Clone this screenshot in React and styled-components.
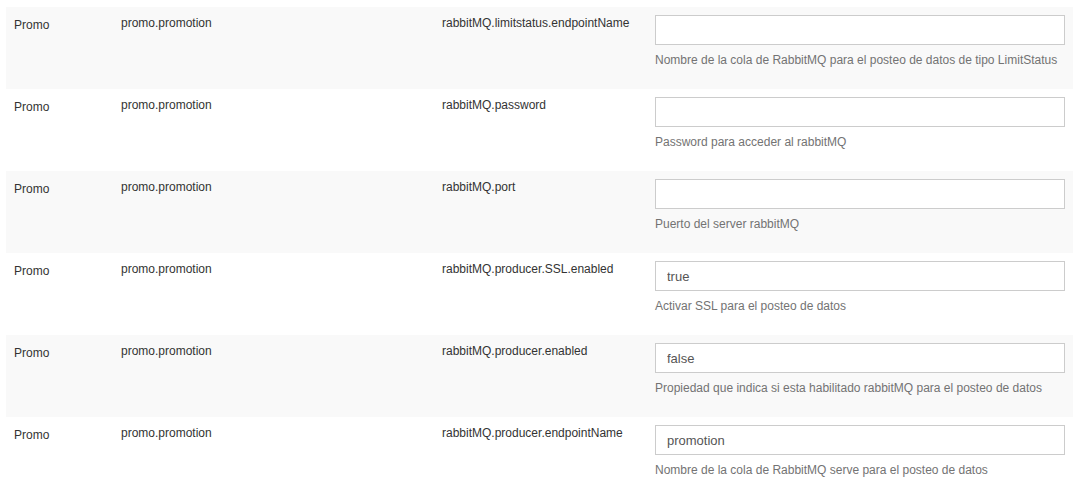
import React from 'react';
import styled, { createGlobalStyle } from 'styled-components';

const GlobalStyle = createGlobalStyle`
  body {
    margin: 0;
    background: #fff;
    font-family: "Liberation Sans", Arial, sans-serif;
  }
`;

const rows = [
  {
    key: 'rabbitMQ.limitstatus.endpointName',
    value: '',
    help: 'Nombre de la cola de RabbitMQ para el posteo de datos de tipo LimitStatus',
  },
  { key: 'rabbitMQ.password', value: '', help: 'Password para acceder al rabbitMQ' },
  { key: 'rabbitMQ.port', value: '', help: 'Puerto del server rabbitMQ' },
  { key: 'rabbitMQ.producer.SSL.enabled', value: 'true', help: 'Activar SSL para el posteo de datos' },
  {
    key: 'rabbitMQ.producer.enabled',
    value: 'false',
    help: 'Propiedad que indica si esta habilitado rabbitMQ para el posteo de datos',
  },
  {
    key: 'rabbitMQ.producer.endpointName',
    value: 'promotion',
    help: 'Nombre de la cola de RabbitMQ serve para el posteo de datos',
  },
];

function App() {
  return (
    <>
      <GlobalStyle />
      <Table>
        {rows.map((row, i) => (
          <Row key={row.key} $striped={i % 2 === 0}>
            <Cell $top={10}>Promo</Cell>
            <Cell $top={8}>promo.promotion</Cell>
            <Cell $top={8}>{row.key}</Cell>
            <Field>
              <Input type='text' defaultValue={row.value} />
              <Help>{row.help}</Help>
            </Field>
          </Row>
        ))}
      </Table>
    </>
  );
}

const Table = styled.div`
  padding: 7px 9px 0 6px;
  display: flex;
  flex-direction: column;
`;

const Row = styled.div`
  display: grid;
  grid-template-columns: 107px 321px 213px 1fr;
  height: 82px;
  box-sizing: border-box;
  background-color: ${(p) => (p.$striped ? '#f9f9f9' : '#fff')};
`;

const Cell = styled.div`
  padding: ${(p) => p.$top}px 8px 0 8px;
  font-size: 12px;
  line-height: 16px;
  color: #333;
`;

const Field = styled.div`
  padding: 8px 8px 0 8px;
  display: flex;
  flex-direction: column;
`;

const Input = styled.input`
  box-sizing: border-box;
  width: 100%;
  height: 30px;
  margin: 0;
  padding: 0 11px;
  border: 1px solid #ccc;
  border-radius: 0;
  background: #fff;
  font-family: "Liberation Sans", Arial, sans-serif;
  font-size: 13px;
  color: #555;
  outline: none;
`;

const Help = styled.span`
  margin-top: 7px;
  font-size: 12px;
  line-height: 16px;
  color: #737373;
`;

export default App;
